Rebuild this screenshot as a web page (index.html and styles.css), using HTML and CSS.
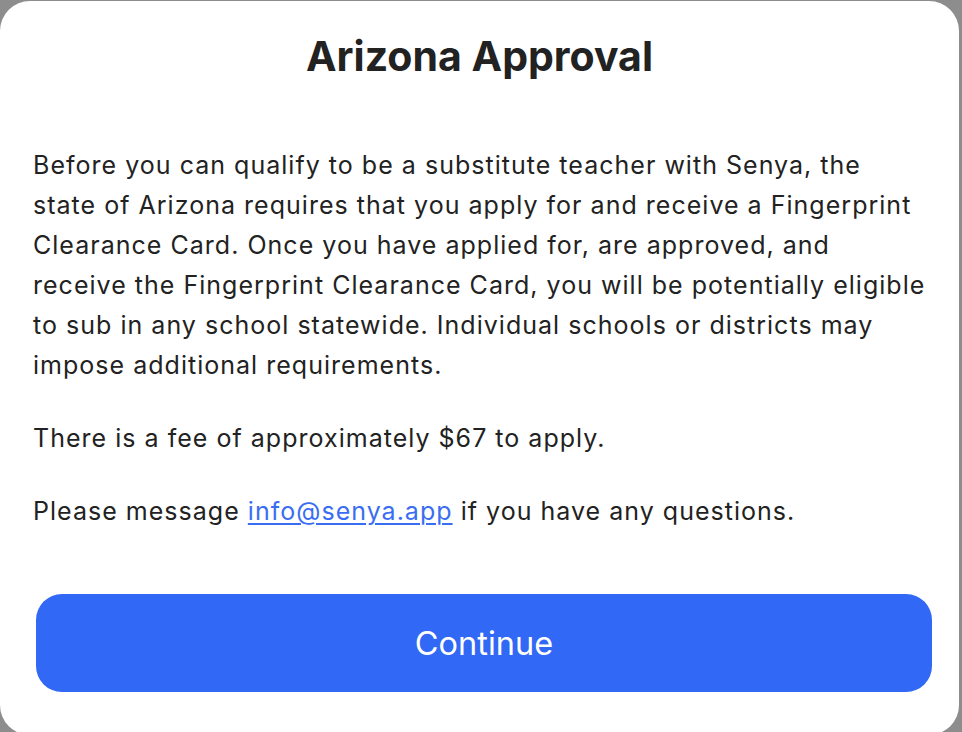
FILE: index.html
```html
<!DOCTYPE html>
<html lang="en">
<head>
<meta charset="utf-8">
<title>Arizona Approval</title>
<link rel="stylesheet" href="styles.css">
</head>
<body>
<div class="modal">
  <h1 class="title">Arizona Approval</h1>
  <div class="content">
    <p class="para">Before you can qualify to be a substitute teacher with Senya, the<br>state of Arizona requires that you apply for and receive a Fingerprint<br>Clearance Card. Once you have applied for, are approved, and<br>receive the Fingerprint Clearance Card, you will be potentially eligible<br>to sub in any school statewide. Individual schools or districts may<br>impose additional requirements.</p>
    <p class="para">There is a fee of approximately $67 to apply.</p>
    <p class="para">Please message <a class="link" href="#">info@senya.app</a> if you have any questions.</p>
  </div>
  <button class="btn" type="button">Continue</button>
</div>
</body>
</html>
```

FILE: styles.css
```css
html, body {
  margin: 0;
  padding: 0;
  height: 100%;
  overflow: hidden;
}
body {
  background: #8d8d8d;
  font-family: Inter, "Noto Sans", "Liberation Sans", sans-serif;
  color: #222222;
}
.modal {
  margin-top: 1px;
  width: 959px;
  height: 734px;
  background: #ffffff;
  border-radius: 30px;
  box-sizing: border-box;
  padding-top: 30px;
  display: flex;
  flex-direction: column;
}
.title {
  margin: 0;
  font-size: 41px;
  line-height: 50px;
  font-weight: 700;
  text-align: center;
  color: #222222;
}
.content {
  margin-top: 64px;
  padding-left: 33px;
  width: 920px;
  white-space: nowrap;
}
.para {
  margin: 0 0 33px 0;
  font-size: 25px;
  letter-spacing: 1.02px;
  line-height: 40px;
  color: #222222;
}
.para:last-child {
  margin-bottom: 0;
}
.link {
  color: #3a6ef2;
  text-decoration: underline;
  text-underline-offset: 3px;
  text-decoration-thickness: 1.5px;
}
.btn {
  margin: 63px 0 0 36px;
  width: 896px;
  height: 98px;
  border: none;
  border-radius: 26px;
  background: #3168f6;
  color: #ffffff;
  font-family: Inter, "Noto Sans", "Liberation Sans", sans-serif;
  font-size: 32.5px;
  font-weight: 400;
  padding: 0;
}
```
